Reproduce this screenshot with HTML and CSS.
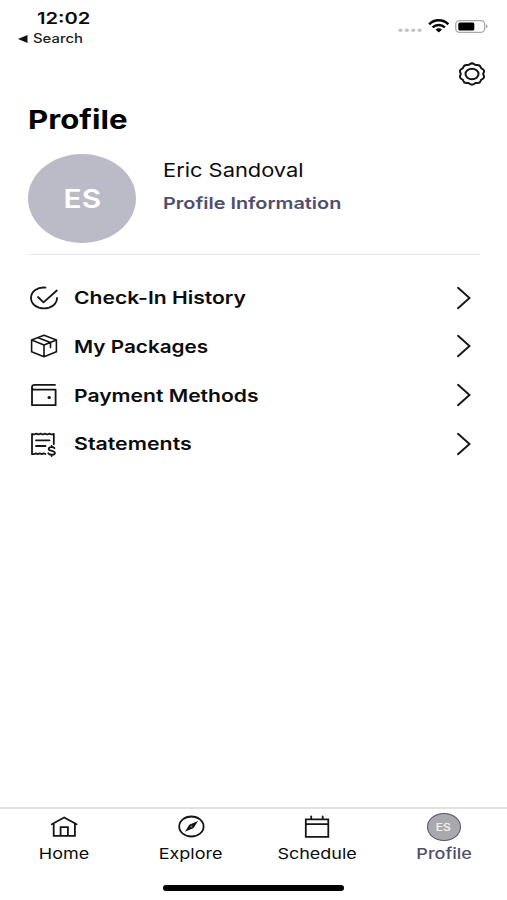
FILE: index.html
```html
<!DOCTYPE html>
<html lang="en">
<head>
<meta charset="utf-8">
<title>Profile</title>
<link rel="stylesheet" href="styles.css">
</head>
<body>
<div class="screen">
  <header class="status">
    <div class="status-left">
      <div class="clock"><span class="wide">12:02</span></div>
      <div class="back"><svg width="10" height="8" viewBox="0 0 10 8"><path d="M0 4 9.5 0v8z" fill="#111"/></svg><span class="wide">Search</span></div>
    </div>
    <div class="status-right">
      <svg width="92" height="20" viewBox="0 0 92 20">
        <g fill="#c4c4c4"><ellipse cx="3.5" cy="14.3" rx="2.1" ry="1.8"/><ellipse cx="9.8" cy="14.3" rx="2.1" ry="1.8"/><ellipse cx="16.2" cy="14.3" rx="2.1" ry="1.8"/><ellipse cx="22.6" cy="14.3" rx="2.1" ry="1.8"/></g>
        <g fill="none" stroke="#050505" stroke-width="2.5"><path d="M32.2 8.3C37.3 3 46.2 3 51.3 8.3"/><path d="M35.6 11.4C39 8.1 44.5 8.1 47.9 11.4"/></g>
        <path d="M38.5 13.5q3.3-2.5 6.6 0L41.8 16.6z" fill="#050505"/>
        <rect x="58.7" y="4.6" width="29" height="11.8" rx="4" fill="#fff" stroke="#aaa" stroke-width="1.4"/>
        <rect x="61.3" y="6.4" width="16" height="8.2" rx="1.6" fill="#000"/>
        <path d="M89.2 8.3q2.8 2 0 4.2z" fill="#999"/>
      </svg>
    </div>
  </header>

  <div class="toolbar">
    <svg width="28" height="24" viewBox="0 0 28 24" fill="none" stroke="#151515" stroke-width="2" stroke-linejoin="round">
      <path d="M11.3 2.5Q14 .2 16.7 2.5Q17.2 3.2 18.2 3.1Q21.8 2.3 22.7 5.2Q22.9 6.2 23.8 6.6Q27 8 25.6 10.7Q25 12 25.6 13.3Q27 16 23.8 17.4Q22.9 17.8 22.7 18.8Q21.8 21.7 18.2 20.9Q17.2 20.8 16.7 21.5Q14 23.8 11.3 21.5Q10.8 20.8 9.8 20.9Q6.2 21.7 5.3 18.8Q5.1 17.8 4.2 17.4Q1 16 2.4 13.3Q3 12 2.4 10.7Q1 8 4.2 6.6Q5.1 6.2 5.3 5.2Q6.2 2.3 9.8 3.1Q10.8 3.2 11.3 2.5Z"/>
      <ellipse cx="14" cy="12" rx="6.5" ry="5.3"/>
    </svg>
  </div>

  <main class="content">
    <h1 class="title"><span class="wide">Profile</span></h1>
    <section class="user">
      <div class="avatar"><span class="wide">ES</span></div>
      <div class="who">
        <div class="name"><span class="wide">Eric Sandoval</span></div>
        <div class="info"><span class="wide">Profile Information</span></div>
      </div>
    </section>
    <nav class="menu">
      <div class="row">
        <svg class="icon" width="30" height="26" viewBox="0 0 30 26"><path d="M16.5 2.6C8.500 1.700 2 6.400 2 13c0 6 5.800 10.400 13 10.400S28 19 28 13"/><path d="m9 12 5.500 5.300L27.800 5.500"/></svg>
        <span class="wide">Check-In History</span>
        <svg class="chevron" width="16" height="24" viewBox="0 0 16 24"><path d="m2 1.8 11.500 10.200L2 22.200"/></svg>
      </div>
      <div class="row packages">
        <svg class="icon thin" width="30" height="26" viewBox="0 0 30 26"><path d="M15 2.200 27.400 7v11.700L15 23.800 2.600 18.700V7zM2.600 7 15 12.100 27.400 7M15 12.100v11.700M9.200 4.700l12.300 4.900v5"/></svg>
        <span class="wide">My Packages</span>
        <svg class="chevron" width="16" height="24" viewBox="0 0 16 24"><path d="m2 1.8 11.500 10.200L2 22.200"/></svg>
      </div>
      <div class="row">
        <svg class="icon" width="30" height="26" viewBox="0 0 30 26"><path d="M26 2.800H5.800Q3 2.800 3 5v18.200h23.600V7.700H5.300Q3 7.700 3 5.500"/><ellipse cx="20.200" cy="15.500" rx="1.700" ry="1.500" fill="#111" stroke="none"/></svg>
        <span class="wide">Payment Methods</span>
        <svg class="chevron" width="16" height="24" viewBox="0 0 16 24"><path d="m2 1.8 11.500 10.200L2 22.200"/></svg>
      </div>
      <div class="row statements">
        <svg class="icon" width="30" height="26" viewBox="0 0 30 26"><path d="M16.500 23 14.800 22.400 12.800 23.200 10.800 22.400 8.800 23.200 6.800 22.400 5 23.200H3V2.800l2 .7 2.200-.8 2.200.8 2.200-.8 2.200.8 2.200-.8 2.200.8 2.200-.8 2.200.8 2.200-.7V13M7 9.300h13.500M7 15h9.500"/><path d="M25.500 17.200C24.600 15.500 19.700 15.500 19.700 18s6.200 1.400 6.200 3.900c0 2.400-5.500 2.400-6.600.4M22.600 14.800v1.300M22.600 23.700v1.300"/></svg>
        <span class="wide">Statements</span>
        <svg class="chevron" width="16" height="24" viewBox="0 0 16 24"><path d="m2 1.8 11.500 10.200L2 22.200"/></svg>
      </div>
    </nav>
  </main>

  <footer class="bottom">
    <nav class="tabs">
      <div class="tab">
        <svg width="34" height="28" viewBox="0 0 34 28"><path d="M4.800 11.200 17.200 4.500l12.400 6.700M6.700 10.200v12.600h21.200V10.200M13.600 22.800v-8.700h7.300v8.700"/></svg>
        <span class="wide">Home</span>
      </div>
      <div class="tab">
        <svg width="34" height="28" viewBox="0 0 34 28"><ellipse cx="17.400" cy="13.500" rx="12.200" ry="10"/><path d="m11 18.700 4.200-6.900 8.800-3.700-4.400 6.800z" fill="#111" stroke="none"/><ellipse cx="17.400" cy="13.500" rx="1.100" ry=".9" fill="#777" stroke="none"/></svg>
        <span class="wide">Explore</span>
      </div>
      <div class="tab">
        <svg width="34" height="28" viewBox="0 0 34 28"><path d="M5.800 6.300h22.500v17.500H5.800zM5.800 11.100h22.500M11.200 3.300v3M22.700 3.300v3"/></svg>
        <span class="wide">Schedule</span>
      </div>
      <div class="tab active">
        <div class="mini"><span class="wide">ES</span></div>
        <span class="wide">Profile</span>
      </div>
    </nav>
    <div class="home-bar"></div>
  </footer>
</div>
</body>
</html>
```
FILE: styles.css
```css
* { box-sizing: border-box; }
body { margin: 0; background: #fff; color: #0c0c0c; font-family: Inter, "Liberation Sans", sans-serif; }
svg { display: block; flex: none; }
.screen { width: 507px; height: 900px; display: flex; flex-direction: column; overflow: hidden; }
.wide { display: inline-block; white-space: nowrap; transform: scaleX(var(--stretch, 1.2)); transform-origin: left center; }

.status { height: 50px; display: flex; justify-content: space-between; padding: 8px 18.5px 0 18px; }
.clock { padding-left: 19px; font-size: 16px; font-weight: 600; line-height: 20px; --stretch: 1.26; }
.back { display: flex; align-items: center; gap: 5px; margin-top: 1px; font-size: 12.5px; font-weight: 500; line-height: 20px; color: #222; --stretch: 1.19; }
.status-right { padding-top: 8px; }

.toolbar { height: 54px; padding: 12px 21px 0 0; display: flex; justify-content: flex-end; }

.content { padding: 0 27px 0 28px; flex: 1; }
.title { margin: 0; height: 50px; font-size: 26px; font-weight: 700; line-height: 31px; color: #000; }
.user { display: flex; gap: 27px; height: 101px; border-bottom: 1px solid #e8e8e8; }
.avatar { width: 108px; height: 89px; border-radius: 50%; background: #bbbbc8; color: #fff; display: flex; align-items: center; justify-content: center; font-size: 26px; font-weight: 600; --stretch: 1.15; }
.avatar .wide, .tab .wide { transform-origin: center; }
.name { margin-top: 5px; font-size: 19px; line-height: 24px; --stretch: 1.15; }
.info { margin-top: 8px; font-size: 16.5px; font-weight: 600; line-height: 24px; color: #504e6c; --stretch: 1.205; }

.menu { padding-top: 18.4px; }
.row { height: 48.7px; display: flex; align-items: center; font-size: 17.5px; font-weight: 600; padding-right: 8px; --stretch: 1.205; }
.packages { --stretch: 1.185; }
.statements { --stretch: 1.22; }
.icon { margin-left: 1px; margin-right: 15px; fill: none; stroke: #151515; stroke-width: 1.8; stroke-linecap: round; stroke-linejoin: round; }
.thin { stroke-width: 1.6; }
.chevron { margin-left: auto; fill: none; stroke: #151515; stroke-width: 1.9; stroke-linecap: round; }

.bottom { height: 93px; border-top: 2px solid #e2e2e2; }
.tabs { display: grid; grid-template-columns: repeat(4, 1fr); height: 76px; padding: 4px 0 0 1px; }
.tab { display: flex; flex-direction: column; align-items: center; font-size: 15px; line-height: 20px; gap: 2.5px; }
.tab svg { height: 28px; fill: none; stroke: #151515; stroke-width: 1.8; stroke-linecap: round; }
.active { color: #504e6c; font-weight: 500; }
.mini { width: 34px; height: 28px; border: 1.5px solid #54526f; border-radius: 50%; background: #a9a9ac; color: #eee; display: flex; align-items: center; justify-content: center; font-size: 10px; font-weight: 600; }
.home-bar { width: 181px; height: 6px; margin: 0 auto; border-radius: 3px; background: #000; }
```
